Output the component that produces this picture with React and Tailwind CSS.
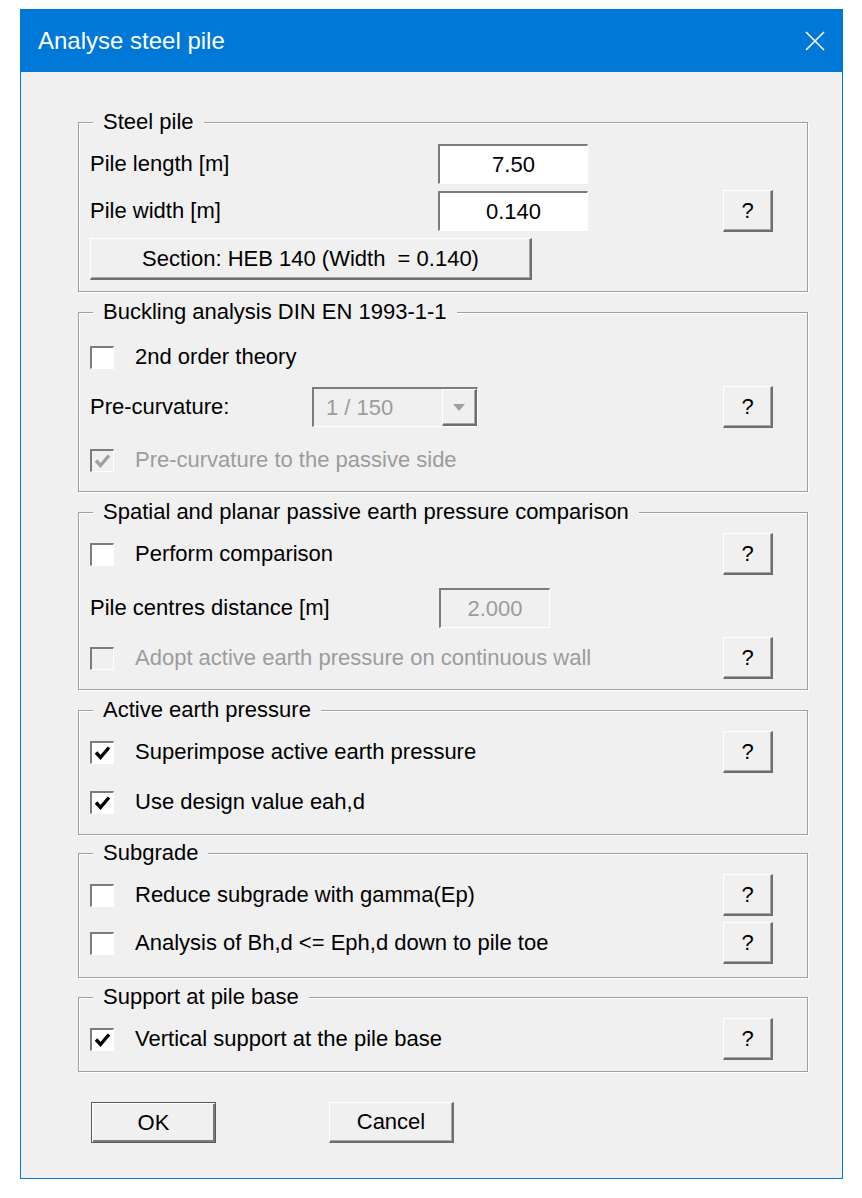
import React from "react";

const raised =
  "bg-[#f0f0f0] border-t border-l border-t-white border-l-white border-b-2 border-r-2 border-b-[#6e6e6e] border-r-[#6e6e6e] shadow-[inset_-1px_-1px_0_#a8a8a8]";
const sunken =
  "border-t-2 border-l-2 border-t-[#7c7c7c] border-l-[#7c7c7c] border-b border-r border-b-white border-r-white";

const HelpButton = () => (
  <button className={`ml-auto w-[50px] h-[42px] flex items-center justify-center ${raised}`}>?</button>
);

const Check = ({ checked, disabled }) => (
  <span
    className={`w-[24px] h-[23px] shrink-0 flex items-center justify-center ${sunken} ${
      disabled ? "bg-[#f0f0f0]" : "bg-white"
    }`}
  >
    {checked && (
      <svg width="20" height="18" viewBox="0 0 20 18">
        <path
          d="M3 8.5 L7.5 13.5 L16 3.5"
          fill="none"
          stroke={disabled ? "#a0a0a0" : "#000"}
          strokeWidth="3.4"
        />
      </svg>
    )}
  </span>
);

const CheckRow = ({ label, checked, disabled, help, className = "" }) => (
  <div className={`flex items-center h-[42px] ${className}`}>
    <Check checked={checked} disabled={disabled} />
    <span className={`ml-[21px] ${disabled ? "text-[#9c9c9c]" : ""}`}>{label}</span>
    {help && <HelpButton />}
  </div>
);

const Group = ({ title, className = "", children }) => (
  <fieldset
    className={`border border-[#a0a0a0] shadow-[1px_1px_0_#fff,inset_1px_1px_0_#fff] pl-[11px] pr-[34px] ${className}`}
  >
    <legend className="ml-[3px] px-[10px] h-[24px] leading-[24px] bg-[#f0f0f0]">{title}</legend>
    {children}
  </fieldset>
);

export default function App() {
  return (
    <div className="min-h-screen bg-white pt-[9px] pl-[20px] font-['Liberation_Sans',Arial,sans-serif] text-[22px] text-black">
      <div className="w-[823px] border border-[#0078d7] bg-[#f0f0f0]">
        {/* Title bar */}
        <div className="h-[62px] bg-[#0078d7] flex items-center pl-[17px] pr-[16px] text-white">
          <span className="text-[24px]">Analyse steel pile</span>
          <svg className="ml-auto" width="22" height="22" viewBox="0 0 22 22">
            <path d="M2 2 L20 20 M20 2 L2 20" stroke="#fff" strokeWidth="1.6" />
          </svg>
        </div>

        {/* Client area */}
        <div className="pt-[38px] pl-[57px] pr-[34px] pb-[35px] leading-none">
          <Group title="Steel pile" className="pt-[10px] pb-[11px]">
            <div className="flex items-center h-[40px]">
              <span className="w-[348px]">Pile length [m]</span>
              <div className={`w-[150px] h-[40px] bg-white flex items-center justify-center ${sunken}`}>7.50</div>
            </div>
            <div className="flex items-center h-[42px] mt-[6px]">
              <span className="w-[348px]">Pile width [m]</span>
              <div className={`w-[150px] h-[40px] bg-white flex items-center justify-center ${sunken}`}>0.140</div>
              <HelpButton />
            </div>
            <button className={`mt-[6px] w-[442px] h-[42px] flex items-center justify-center whitespace-pre ${raised}`}>
              Section: HEB 140 (Width  = 0.140)
            </button>
          </Group>

          <Group title="Buckling analysis DIN EN 1993-1-1" className="mt-[8px] pt-[12px] pb-[10px]">
            <CheckRow label="2nd order theory" />
            <div className="flex items-center h-[42px] mt-[8px]">
              <span className="w-[222px]">Pre-curvature:</span>
              <div className={`w-[166px] h-[40px] bg-[#f0f0f0] flex items-stretch ${sunken}`}>
                <span className="flex-1 flex items-center pl-[12px] text-[#9c9c9c]">1 / 150</span>
                <span className={`w-[35px] flex items-center justify-center ${raised}`}>
                  <svg width="12" height="7" viewBox="0 0 12 7">
                    <path d="M0 0 L12 0 L6 7 Z" fill="#a0a0a0" />
                  </svg>
                </span>
              </div>
              <HelpButton />
            </div>
            <CheckRow label="Pre-curvature to the passive side" checked disabled className="mt-[11px]" />
          </Group>

          <Group title="Spatial and planar passive earth pressure comparison" className="mt-[8px] pt-[9px] pb-[10px]">
            <CheckRow label="Perform comparison" help />
            <div className="flex items-center h-[42px] mt-[12px]">
              <span className="w-[349px]">Pile centres distance [m]</span>
              <div className={`w-[111px] h-[40px] bg-[#f0f0f0] flex items-center justify-center text-[#9c9c9c] ${sunken}`}>
                2.000
              </div>
            </div>
            <CheckRow label="Adopt active earth pressure on continuous wall" disabled help className="mt-[8px]" />
          </Group>

          <Group title="Active earth pressure" className="mt-[8px] pt-[9px] pb-[11px]">
            <CheckRow label="Superimpose active earth pressure" checked help />
            <CheckRow label="Use design value eah,d" checked className="mt-[8px]" />
          </Group>

          <Group title="Subgrade" className="mt-[6px] pt-[9px] pb-[13px]">
            <CheckRow label="Reduce subgrade with gamma(Ep)" help />
            <CheckRow label="Analysis of Bh,d <= Eph,d down to pile toe" help className="mt-[6px]" />
          </Group>

          <Group title="Support at pile base" className="mt-[7px] pt-[9px] pb-[11px]">
            <CheckRow label="Vertical support at the pile base" checked help />
          </Group>

          <div className="flex mt-[30px] pl-[13px] gap-[113px]">
            <button className="w-[125px] h-[41px] bg-[#f0f0f0] border border-[#5a5a5a] shadow-[inset_1px_1px_0_#fff,inset_-2px_-2px_0_#7a7a7a]">
              OK
            </button>
            <button className={`w-[125px] h-[41px] ${raised}`}>Cancel</button>
          </div>
        </div>
      </div>
    </div>
  );
}
